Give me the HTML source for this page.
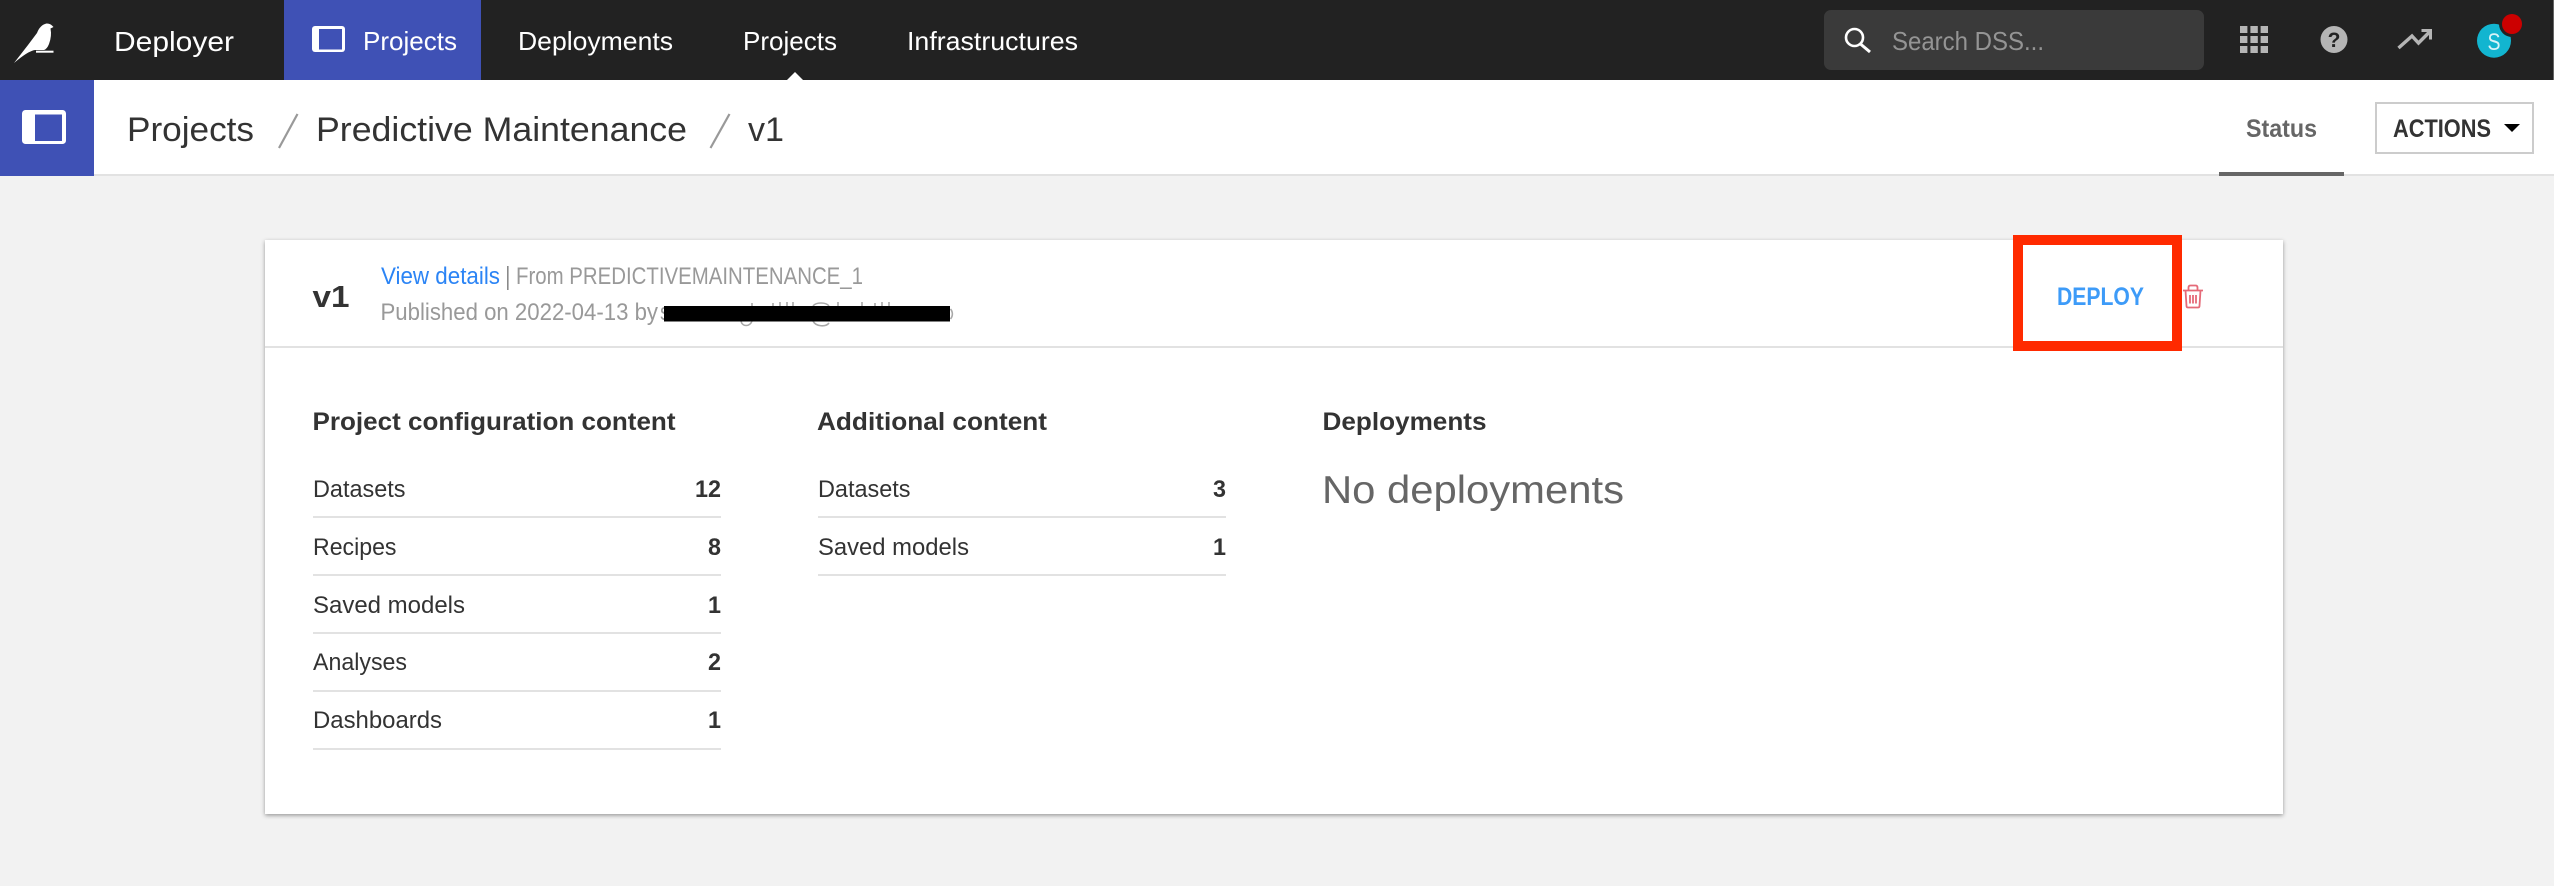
<!DOCTYPE html>
<html lang="en">
<head>
<meta charset="utf-8">
<title>Deployer - Projects</title>
<style>
html,body{margin:0;padding:0;width:2554px;height:886px;overflow:hidden;background:#f2f2f2}
svg{display:block}
text{font-family:"Liberation Sans",sans-serif;white-space:pre}
.b{font-weight:700}
</style>
</head>
<body>
<svg xmlns="http://www.w3.org/2000/svg" width="2554" height="886" viewBox="0 0 2554 886">
<defs>
<filter id="sh" x="-2%" y="-3%" width="104%" height="106%">
<feDropShadow dx="0" dy="1.5" stdDeviation="2.2" flood-color="#000" flood-opacity=".38"/>
</filter>
</defs>
<rect width="2554" height="886" fill="#f2f2f2"/>

<!-- top bar -->
<rect width="2554" height="80" fill="#222222"/>
<rect x="2553" width="1" height="80" fill="#666"/>
<path d="M14 63L28 45L37 33Q40 25 46.500 23.500Q50 23.500 52 25.500L53.500 27L50.500 28.500Q52 36 49 44Q47 49 44 50L35 50Q28 51 14 63Z" fill="#fff"/>
<rect x="36" y="50.700" width="17.500" height="2" fill="#fff"/>
<text x="114" y="51" font-size="28" fill="#fff" textLength="120" lengthAdjust="spacingAndGlyphs">Deployer</text>
<rect x="284" width="197" height="80" fill="#3f51b5"/>
<rect x="312" y="26" width="33" height="26" rx="3" fill="#fff"/>
<rect x="319" y="29" width="23" height="20.500" fill="#3f51b5"/>
<text x="363" y="50" font-size="26" fill="#fff" textLength="94" lengthAdjust="spacingAndGlyphs">Projects</text>
<text x="518" y="50" font-size="26" fill="#fff" textLength="155" lengthAdjust="spacingAndGlyphs">Deployments</text>
<text x="743" y="50" font-size="26" fill="#fff" textLength="94" lengthAdjust="spacingAndGlyphs">Projects</text>
<text x="907" y="50" font-size="26" fill="#fff" textLength="171" lengthAdjust="spacingAndGlyphs">Infrastructures</text>
<path d="M787 80L795 72L803 80Z" fill="#fff"/>

<!-- search -->
<rect x="1824" y="10" width="380" height="60" rx="7" fill="#3a3a3a"/>
<circle cx="1854.500" cy="37.500" r="8.500" fill="none" stroke="#fff" stroke-width="2.600"/>
<path d="M1860.500 44L1870 52" stroke="#fff" stroke-width="3" fill="none"/>
<text x="1892" y="50" font-size="26" fill="#949494" textLength="152" lengthAdjust="spacingAndGlyphs">Search DSS...</text>

<!-- right icons -->
<g fill="#b5b5b5">
<rect x="2240" y="26" width="7.400" height="7"/><rect x="2250.400" y="26" width="7.400" height="7"/><rect x="2260.600" y="26" width="7.400" height="7"/>
<rect x="2240" y="36" width="7.400" height="7"/><rect x="2250.400" y="36" width="7.400" height="7"/><rect x="2260.600" y="36" width="7.400" height="7"/>
<rect x="2240" y="46" width="7.400" height="7"/><rect x="2250.400" y="46" width="7.400" height="7"/><rect x="2260.600" y="46" width="7.400" height="7"/>
<circle cx="2334" cy="39.500" r="13.500"/>
</g>
<text x="2334" y="47" font-size="21" class="b" fill="#222" text-anchor="middle">?</text>
<path d="M2398.500 48L2412 36L2418.500 43L2430 31.500" fill="none" stroke="#b5b5b5" stroke-width="3.400"/>
<path d="M2421.500 30.500H2430.500V39.500" fill="none" stroke="#b5b5b5" stroke-width="3"/>
<circle cx="2494" cy="40.700" r="17" fill="#12b5d0"/>
<text x="2494" y="50" font-size="24" fill="#d8f3f8" text-anchor="middle" textLength="13" lengthAdjust="spacingAndGlyphs">S</text>
<circle cx="2512" cy="24" r="13" fill="#222"/>
<circle cx="2512" cy="24" r="10" fill="#cc0000"/>

<!-- sub header -->
<rect y="80" width="2554" height="96" fill="#fff"/>
<rect y="174" width="2554" height="2" fill="#e2e2e2"/>
<rect y="80" width="94" height="96" fill="#3f51b5"/>
<rect x="22" y="110" width="44" height="34" rx="3.500" fill="#fff"/>
<rect x="35" y="114.500" width="27" height="26.500" fill="#3f51b5"/>
<text x="127" y="141" font-size="34" fill="#333" textLength="127" lengthAdjust="spacingAndGlyphs">Projects</text>
<path d="M279 148L297.500 114" stroke="#999" stroke-width="2.200" fill="none"/>
<text x="316" y="141" font-size="34" fill="#333" textLength="371" lengthAdjust="spacingAndGlyphs">Predictive Maintenance</text>
<path d="M710.500 148L729.500 114" stroke="#999" stroke-width="2.200" fill="none"/>
<text x="748" y="141" font-size="34" fill="#333" textLength="36" lengthAdjust="spacingAndGlyphs">v1</text>
<text x="2246" y="137" font-size="25" class="b" fill="#666" textLength="71" lengthAdjust="spacingAndGlyphs">Status</text>
<rect x="2219" y="172" width="125" height="4" fill="#666"/>
<rect x="2376" y="103" width="157" height="50" fill="#fff" stroke="#cccccc" stroke-width="2"/>
<text x="2393" y="137" font-size="25" class="b" fill="#333" textLength="98" lengthAdjust="spacingAndGlyphs">ACTIONS</text>
<path d="M2504 124H2520L2512 132Z" fill="#000"/>

<!-- card -->
<rect x="265" y="240" width="2018" height="574" fill="#fff" filter="url(#sh)"/>
<rect x="265" y="346" width="2018" height="2" fill="#e2e2e2"/>
<text x="312.500" y="307" font-size="31" class="b" fill="#333" textLength="37" lengthAdjust="spacingAndGlyphs">v1</text>
<text x="381" y="284" font-size="24.500" fill="#2b84f5" textLength="119" lengthAdjust="spacingAndGlyphs">View details</text>
<rect x="507" y="266" width="1.600" height="24" fill="#8a8a8a"/>
<text x="516" y="284" font-size="24.500" fill="#999" textLength="347" lengthAdjust="spacingAndGlyphs">From PREDICTIVEMAINTENANCE_1</text>
<text x="380.500" y="320" font-size="24.500" fill="#999" textLength="277.500" lengthAdjust="spacingAndGlyphs">Published on 2022-04-13 by</text>
<text x="660" y="320" font-size="24.500" fill="#999" textLength="10" lengthAdjust="spacingAndGlyphs">s</text>
<!-- remnants of the covered line showing around the redaction bar -->
<g fill="none" stroke="#a8a8a8" stroke-width="1.600">
<path d="M741 321C742 327 750 327 752 321"/>
<path d="M752 303V306M773 303V306M780 302V306M787 302V306M793 302V306"/>
<path d="M813 321C816 327 826 327 829 323M813 306C816 302 826 302 829 306"/>
<path d="M838 302V306M862 302V306M875 303V306M882 302V306M889 302V306"/>
<path d="M950.500 309C953 312 953 316 950.500 319"/>
</g>
<rect x="664" y="306" width="286" height="15.500" fill="#000"/>

<!-- deploy + red marker -->
<text x="2057" y="305" font-size="25" class="b" fill="#3d9bf8" textLength="87" lengthAdjust="spacingAndGlyphs">DEPLOY</text>
<rect x="2018" y="240" width="159" height="106" fill="none" stroke="#ff2a00" stroke-width="10"/>
<g fill="none" stroke="#e56a78" stroke-width="1.800">
<path d="M2183 290.500H2203"/>
<path d="M2188.500 290V287.500Q2188.500 285.500 2190.500 285.500H2195.500Q2197.500 285.500 2197.500 287.500V290"/>
<path d="M2185.500 290.500L2186.500 306Q2186.500 307.500 2188 307.500H2198Q2199.500 307.500 2199.500 306L2200.500 290.500"/>
<path d="M2190 295V303.500M2193 295V303.500M2196 295V303.500"/>
</g>

<!-- headings -->
<text x="312.500" y="430" font-size="25" class="b" fill="#333" textLength="363" lengthAdjust="spacingAndGlyphs">Project configuration content</text>
<text x="817" y="430" font-size="25" class="b" fill="#333" textLength="230" lengthAdjust="spacingAndGlyphs">Additional content</text>
<text x="1322.500" y="430" font-size="25" class="b" fill="#333" textLength="164" lengthAdjust="spacingAndGlyphs">Deployments</text>
<text x="1322" y="503" font-size="39" fill="#666" textLength="302" lengthAdjust="spacingAndGlyphs">No deployments</text>

<!-- rows -->
<g font-size="24" fill="#333">
<text x="313" y="497" textLength="92.500" lengthAdjust="spacingAndGlyphs">Datasets</text>
<text x="313" y="555" textLength="83.500" lengthAdjust="spacingAndGlyphs">Recipes</text>
<text x="313" y="613" textLength="152" lengthAdjust="spacingAndGlyphs">Saved models</text>
<text x="313" y="670" textLength="94" lengthAdjust="spacingAndGlyphs">Analyses</text>
<text x="313" y="728" textLength="129" lengthAdjust="spacingAndGlyphs">Dashboards</text>
<text x="818" y="497" textLength="92.500" lengthAdjust="spacingAndGlyphs">Datasets</text>
<text x="818" y="555" textLength="151" lengthAdjust="spacingAndGlyphs">Saved models</text>
</g>
<g font-size="24" class="b" fill="#333" text-anchor="end">
<text x="721" y="497" textLength="26" lengthAdjust="spacingAndGlyphs">12</text>
<text x="721" y="555" textLength="13" lengthAdjust="spacingAndGlyphs">8</text>
<text x="721" y="613" textLength="13" lengthAdjust="spacingAndGlyphs">1</text>
<text x="721" y="670" textLength="13" lengthAdjust="spacingAndGlyphs">2</text>
<text x="721" y="728" textLength="13" lengthAdjust="spacingAndGlyphs">1</text>
<text x="1226" y="497" textLength="13" lengthAdjust="spacingAndGlyphs">3</text>
<text x="1226" y="555" textLength="13" lengthAdjust="spacingAndGlyphs">1</text>
</g>
<g fill="#e2e2e2">
<rect x="313" y="516" width="408" height="2"/>
<rect x="313" y="574" width="408" height="2"/>
<rect x="313" y="632" width="408" height="2"/>
<rect x="313" y="690" width="408" height="2"/>
<rect x="313" y="748" width="408" height="2"/>
<rect x="818" y="516" width="408" height="2"/>
<rect x="818" y="574" width="408" height="2"/>
</g>
</svg>
</body>
</html>
